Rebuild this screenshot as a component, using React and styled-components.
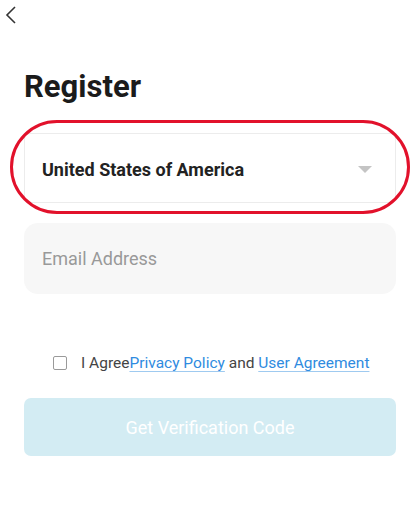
import React from "react";
import styled, { createGlobalStyle } from "styled-components";

const Global = createGlobalStyle`
  html, body { margin: 0; padding: 0; background: #fff; }
  body { font-family: Roboto, "Noto Sans", sans-serif; }
`;

const Page = styled.div`
  width: 417px;
  height: 506px;
  background: #fff;
  display: flex;
  flex-direction: column;
  overflow: hidden;
`;

const TopBar = styled.div`
  height: 30px;
  padding: 4px 0 0 4px;
  box-sizing: border-box;
`;

const BackButton = styled.button`
  border: 0;
  background: none;
  padding: 0;
  width: 14px;
  height: 22px;
  display: block;
  cursor: pointer;
`;

const Title = styled.h1`
  margin: 39px 0 0 24px;
  font-size: 31px;
  line-height: 36px;
  font-weight: 700;
  color: #1b1b1b;
`;

const Form = styled.div`
  display: flex;
  flex-direction: column;
  padding: 0 21px 0 24px;
  margin-top: 28px;
`;

const Highlight = styled.div`
  position: relative;
`;

const Ring = styled.div`
  position: absolute;
  left: -14px;
  right: -14px;
  top: -13px;
  bottom: -11px;
  border: 3.5px solid #e2112b;
  border-radius: 48px;
  pointer-events: none;
`;

const Select = styled.div`
  height: 70px;
  border: 1px solid #ececec;
  border-radius: 6px;
  box-sizing: border-box;
  display: flex;
  align-items: center;
  justify-content: space-between;
  padding: 2px 23px 0 17px;
  font-size: 18px;
  font-weight: 700;
  color: #222;
`;

const Caret = styled.span`
  width: 0;
  height: 0;
  border-left: 7px solid transparent;
  border-right: 7px solid transparent;
  border-top: 7px solid #c4c4c4;
`;

const Field = styled.div`
  margin-top: 20px;
  height: 71px;
  background: #f7f7f7;
  border-radius: 14px;
  display: flex;
  align-items: center;
  padding: 0 18px;
  font-size: 18px;
  color: #999;
`;

const Agree = styled.label`
  margin: 60px 0 0 29px;
  display: flex;
  align-items: center;
  font-size: 15.5px;
  color: #444;
`;

const Box = styled.span`
  width: 12px;
  height: 12px;
  border: 1.5px solid #9a9a9a;
  border-radius: 2px;
  margin-right: 14px;
`;

const Link = styled.a`
  color: #2f8be0;
  text-decoration: underline;
  text-decoration-color: #9fcaf0;
  text-underline-offset: 3px;
`;

const Button = styled.button`
  margin-top: 26px;
  height: 58px;
  border: 0;
  border-radius: 7px;
  background: #d3ecf3;
  color: #fff;
  font-family: Roboto, sans-serif;
  font-size: 18px;
`;

export default function App() {
  return (
    <Page>
      <Global />
      <TopBar>
        <BackButton aria-label="Back">
          <svg width="14" height="22" viewBox="0 0 14 22">
            <path d="M11 3 L3 11 L11 19" fill="none" stroke="#333" strokeWidth="1.6" />
          </svg>
        </BackButton>
      </TopBar>
      <Title>Register</Title>
      <Form>
        <Highlight>
          <Select>
            United States of America
            <Caret />
          </Select>
          <Ring />
        </Highlight>
        <Field>Email Address</Field>
        <Agree>
          <Box />
          I Agree<Link>Privacy Policy</Link>&nbsp;and&nbsp;<Link>User Agreement</Link>
        </Agree>
        <Button>Get Verification Code</Button>
      </Form>
    </Page>
  );
}
